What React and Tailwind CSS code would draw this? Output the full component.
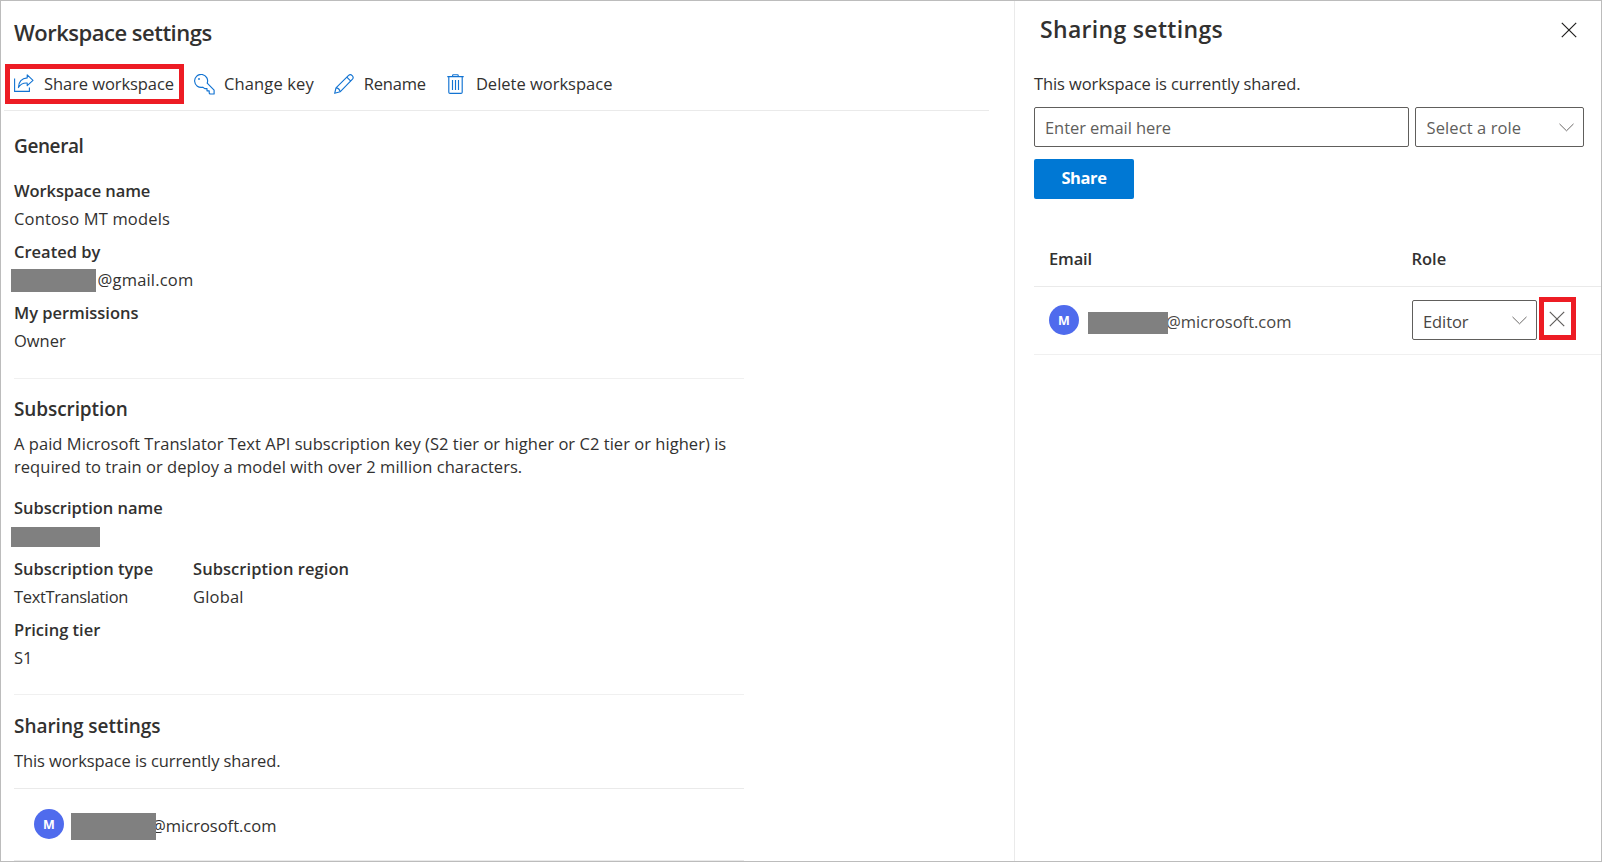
function ShareIcon() {
  return (
    <svg className="h-5 w-5 shrink-0" viewBox="0 0 20 20" fill="none" stroke="#1273d2" strokeWidth="1.1">
      <path d="M0.6 4.4V17.4H15.4V13.6" />
      <path d="M13.2 0.9L19 6.4L13.2 11.7V9C9.6 8.8 6.4 9.9 4.4 13.6C4.7 8.2 7.7 4.3 13.2 3.9Z" strokeLinejoin="round" />
    </svg>
  );
}

function KeyIcon() {
  return (
    <svg className="h-[21px] w-[21px] shrink-0" viewBox="0 0 21 21" fill="none" stroke="#1273d2" strokeWidth="1.15" strokeLinejoin="round">
      <path d="M13.2 9.2A6.5 6.5 0 1 0 8.8 13.2L10.8 14.6H13V16.8H15.2V19.2L16 20H20.1V16.2Z" />
      <circle cx="5" cy="5" r="0.9" fill="#1273d2" stroke="none" />
    </svg>
  );
}

function PencilIcon() {
  return (
    <svg className="h-5 w-5 shrink-0" viewBox="0 0 20 20" fill="none" stroke="#1273d2" strokeWidth="1.15" strokeLinejoin="round">
      <path d="M0.7 19.3L2 13.8L14.6 1.4C17 -0.6 20.5 2.7 18.5 5.2L6.1 17.8Z" />
      <path d="M2 13.8C4 13.8 6 15.6 6.1 17.8M12.8 3.2L16.8 7.2" />
    </svg>
  );
}

function TrashIcon() {
  return (
    <svg className="h-5 w-[17px] shrink-0" viewBox="0 0 17 20" fill="none" stroke="#1273d2" strokeWidth="1.15">
      <path d="M0.3 2.6H16.7M5.6 2.6V1.4Q5.6 0.7 6.3 0.7H10.5Q11.2 0.7 11.2 1.4V2.6M1.8 2.6V18.2Q1.8 19.4 3 19.4H14Q15.2 19.4 15.2 18.2V2.6" />
      <path d="M5.5 6V16M8.5 6V16M11.5 6V16" />
    </svg>
  );
}

function CloseIcon({ className }) {
  return (
    <svg className={className} viewBox="0 0 16 16" fill="none" stroke="currentColor" strokeWidth="1.2">
      <path d="M0.8 0.8L15.2 15.2M15.2 0.8L0.8 15.2" />
    </svg>
  );
}

function Chevron() {
  return (
    <svg className="h-[9px] w-[15px] shrink-0 text-[#6b6967]" viewBox="0 0 15 9" fill="none" stroke="currentColor" strokeWidth="1">
      <path d="M0.5 0.9L7.5 7.8L14.5 0.9" />
    </svg>
  );
}

function Avatar() {
  return (
    <span className="flex h-[30px] w-[30px] shrink-0 items-center justify-center rounded-full bg-[#4f6bed] text-[12.5px] font-bold text-white">
      M
    </span>
  );
}

function Field({ label, className, children }) {
  return (
    <div className={className}>
      <div className="font-semibold">{label}</div>
      <div className="mt-[5px] flex h-[23px] whitespace-nowrap">{children}</div>
    </div>
  );
}

function SectionTitle({ children, className }) {
  return <h2 className={`text-[19px] leading-[26px] font-semibold ${className}`}>{children}</h2>;
}

function SettingsPane() {
  return (
    <main className="flex h-full w-[1013px] shrink-0 flex-col">
      <h1 className="mt-4 ml-[13px] text-[22px] leading-[30px] font-semibold tracking-[-0.5px]">Workspace settings</h1>
      <nav className="mt-[17px] ml-1 flex h-10 items-center">
        <button className="flex h-10 w-[179px] items-center border-[5px] border-[#ed1c24] pl-1">
          <ShareIcon />
          <span className="mb-[2px] ml-[10px] tracking-[-0.07px] whitespace-nowrap">Share workspace</span>
        </button>
        <button className="ml-[10px] flex items-center">
          <KeyIcon />
          <span className="mb-[2px] ml-[9px] tracking-[0.13px]">Change key</span>
        </button>
        <button className="ml-5 flex items-center">
          <PencilIcon />
          <span className="mb-[2px] ml-[10px] tracking-[-0.2px]">Rename</span>
        </button>
        <button className="ml-[21px] flex items-center">
          <TrashIcon />
          <span className="mb-[2px] ml-3">Delete workspace</span>
        </button>
      </nav>
      <hr className="mt-[6px] ml-[3px] w-[985px] border-[#eaeaea]" />

      <div className="ml-[13px] flex w-[730px] flex-col">
        <SectionTitle className="mt-[22px] tracking-[-0.4px]">General</SectionTitle>
        <Field label="Workspace name" className="mt-5 tracking-[-0.08px]">
          <span className="tracking-[0.17px]">Contoso MT models</span>
        </Field>
        <Field label="Created by" className="mt-[10px]">
          <span className="mt-px -ml-[3px] h-[23px] w-[85px] bg-[#808080]" />
          <span className="ml-[1.5px] tracking-[0.2px]">@gmail.com</span>
        </Field>
        <Field label="My permissions" className="mt-[10px] tracking-[-0.03px]">Owner</Field>
        <hr className="mt-[26px] border-[#f0f0f0]" />

        <SectionTitle className="mt-[17px] tracking-[-0.1px]">Subscription</SectionTitle>
        <p className="mt-[10px] tracking-[0.04px] whitespace-nowrap">
          A paid Microsoft Translator Text API subscription key (S2 tier or higher or C2 tier or higher) is
          <br />
          required to train or deploy a model with over 2 million characters.
        </p>
        <div className="mt-[18px] font-semibold tracking-[-0.04px]">Subscription name</div>
        <div className="mt-2 -ml-[3px] h-5 w-[89px] bg-[#808080]" />
        <div className="mt-[10px] flex">
          <Field label="Subscription type" className="w-[179px]">
            <span className="tracking-[-0.35px]">TextTranslation</span>
          </Field>
          <Field label="Subscription region" className="tracking-[0.06px]">
            <span className="tracking-[0.2px]">Global</span>
          </Field>
        </div>
        <Field label="Pricing tier" className="mt-[10px]">S1</Field>
        <hr className="mt-[25px] border-[#f0f0f0]" />

        <SectionTitle className="mt-[18px] tracking-[-0.03px]">Sharing settings</SectionTitle>
        <p className="mt-[10px] tracking-[-0.09px]">This workspace is currently shared.</p>
        <hr className="mt-4 border-[#eaeaea]" />
        <div className="mt-5 flex h-[30px] items-center pl-5">
          <Avatar />
          <span className="relative z-10 mt-[5px] ml-[7px] h-[27px] w-[85px] bg-[#808080]" />
          <span className="mt-[2px] -ml-[5px]">@microsoft.com</span>
        </div>
        <hr className="mt-[21px] border-[#eaeaea]" />
      </div>
    </main>
  );
}

function SharingPanel() {
  return (
    <aside className="flex h-full flex-1 flex-col border-l border-[#eaeaea] pl-[19px]">
      <div className="flex h-[50px] items-start justify-between pr-[24px] pl-[6px]">
        <h1 className="mt-3 text-[23px] leading-8 font-semibold tracking-[0.32px]">Sharing settings</h1>
        <CloseIcon className="mt-[21px] h-4 w-4 text-[#201f1e]" />
      </div>
      <p className="mt-[21px] tracking-[-0.09px]">This workspace is currently shared.</p>
      <div className="mt-3 flex gap-[6px]">
        <input
          className="h-10 w-[375px] rounded-[2px] border border-[#605e5c] px-[10px] tracking-[-0.07px] placeholder:text-[#605e5c]"
          placeholder="Enter email here"
        />
        <div className="flex h-10 w-[169px] items-center justify-between rounded-[2px] border border-[#605e5c] pr-[9px] pl-[10.5px]">
          <span className="tracking-[0.1px] text-[#605e5c]">Select a role</span>
          <Chevron />
        </div>
      </div>
      <button className="mt-3 flex h-10 w-[100px] justify-center rounded-[2px] bg-[#0078d4] pt-[7px] font-bold tracking-[-0.4px] text-white">
        Share
      </button>

      <div className="mt-12 flex font-semibold">
        <div className="w-[377.5px] pl-[15px] tracking-[-0.15px]">Email</div>
        <div>Role</div>
      </div>
      <hr className="mt-4 border-[#eaeaea]" />
      <div className="flex h-[67px] items-start">
        <div className="flex w-[378px] items-start pt-[18px] pl-[15px]">
          <Avatar />
          <span className="relative z-10 mt-[7px] ml-[9px] h-[22px] w-20 bg-[#808080]" />
          <span className="mt-[5px] -ml-[2px] text-[#484644]">@microsoft.com</span>
        </div>
        <div className="mt-[13px] flex h-10 w-[125px] items-center justify-between rounded-[2px] border border-[#605e5c] pr-[9px] pl-[10px]">
          <span className="mt-[3px] tracking-[-0.1px] text-[#484644]">Editor</span>
          <Chevron />
        </div>
        <button className="mt-[10px] ml-[2px] flex h-[43px] w-[37px] items-center border-[5px] border-[#ed1c24] pl-[4.5px]">
          <CloseIcon className="h-4 w-4 text-[#605e5c]" />
        </button>
      </div>
      <hr className="border-[#f0f0f0]" />
    </aside>
  );
}

export default function App() {
  return (
    <div className="flex h-[862px] w-[1602px] overflow-hidden border border-[#bcbcbc] bg-white font-['Open_Sans','Noto_Sans',sans-serif] text-[16.5px] leading-[23px] text-[#323130]">
      <SettingsPane />
      <SharingPanel />
    </div>
  );
}
